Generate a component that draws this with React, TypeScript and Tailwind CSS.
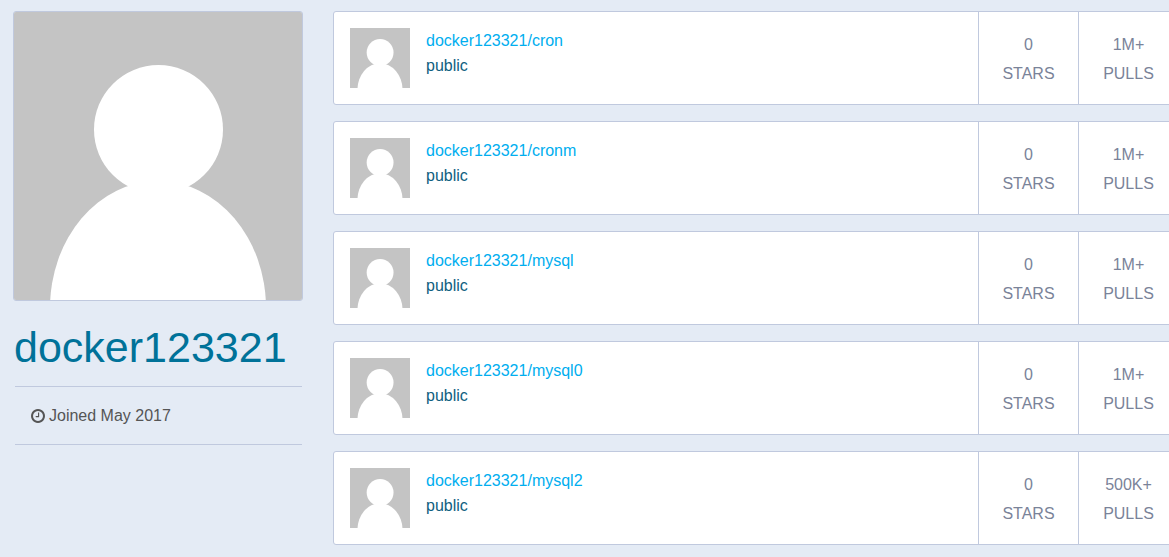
import { clsx } from 'clsx';

interface Repository {
  name: string;
  visibility: string;
  stars: string;
  pulls: string;
}

const username = 'docker123321';

const repositories: Repository[] = [
  { name: 'cron', visibility: 'public', stars: '0', pulls: '1M+' },
  { name: 'cronm', visibility: 'public', stars: '0', pulls: '1M+' },
  { name: 'mysql', visibility: 'public', stars: '0', pulls: '1M+' },
  { name: 'mysql0', visibility: 'public', stars: '0', pulls: '1M+' },
  { name: 'mysql2', visibility: 'public', stars: '0', pulls: '500K+' },
];

const Avatar = ({ className }: { className?: string }) => (
  <svg viewBox="0 0 288 288" className={clsx('block bg-[#c4c4c4]', className)} role="img" aria-label="Avatar">
    <circle cx="144.500" cy="117.500" r="64.500" fill="#fff" />
    <ellipse cx="144" cy="296" rx="108" ry="127" fill="#fff" />
  </svg>
);

const ClockIcon = () => (
  <svg viewBox="0 128 1536 1536" className="size-3.5" fill="currentColor" aria-hidden="true">
    <path d="M896 544v448q0 14-9 23t-23 9H544q-14 0-23-9t-9-23v-64q0-14 9-23t23-9h224V544q0-14 9-23t23-9h64q14 0 23 9t9 23zm416 352q0-148-73-273t-198-198-273-73-273 73-198 198-73 273 73 273 198 198 273 73 273-73 198-198 73-273zm224 0q0 209-103 385.500T1153.500 1561 768 1664t-385.500-103T103 1281.500 0 896t103-385.500T382.500 231 768 128t385.500 103T1433 510.500 1536 896z" />
  </svg>
);

const Stat = ({ value, label }: { value: string; label: string }) => (
  <div className="flex w-[100px] shrink-0 flex-col items-center border-l border-[#c0c9de] pt-[18px] leading-[29px] text-[#7a8399]">
    <span>{value}</span>
    <span>{label}</span>
  </div>
);

const RepositoryCard = ({ repo }: { repo: Repository }) => (
  <li className="flex rounded-[3px] border border-[#c0c9de] bg-white">
    <div className="flex flex-1 gap-4 p-4">
      <Avatar className="size-[60px]" />
      <div className="leading-[25px]">
        <a href={`#${repo.name}`} className="text-[#00aeef]">
          {username}/{repo.name}
        </a>
        <p className="text-[#0f6080]">{repo.visibility}</p>
      </div>
    </div>
    <Stat value={repo.stars} label="STARS" />
    <Stat value={repo.pulls} label="PULLS" />
  </li>
);

const App = () => {
  return (
    <div className="min-h-screen overflow-hidden bg-[#e4ebf5] font-['Liberation_Sans',Arial,sans-serif] text-base">
      <div className="flex items-start gap-[30px] pt-[11px] pb-3 pl-[13px]">
        {/* Profile */}
        <aside className="w-[290px] shrink-0">
          <div className="overflow-hidden rounded-[3px] border border-[#c0c9de]">
            <Avatar className="w-full" />
          </div>
          <h1 className="px-px pt-5 pb-3 text-[43px] leading-[53px] text-[#007299]">{username}</h1>
          <div className="mr-px ml-0.5 flex items-center gap-1 border-y border-[#c0c9de] p-4 leading-[25px] text-[#555]">
            <ClockIcon />
            <span>Joined May 2017</span>
          </div>
        </aside>

        {/* Repositories, running past the right edge of the window */}
        <main className="-mr-[10px] min-w-0 flex-1">
          <ul className="flex flex-col gap-4">
            {repositories.map((repo) => (
              <RepositoryCard key={repo.name} repo={repo} />
            ))}
          </ul>
        </main>
      </div>
    </div>
  );
};

export default App;
